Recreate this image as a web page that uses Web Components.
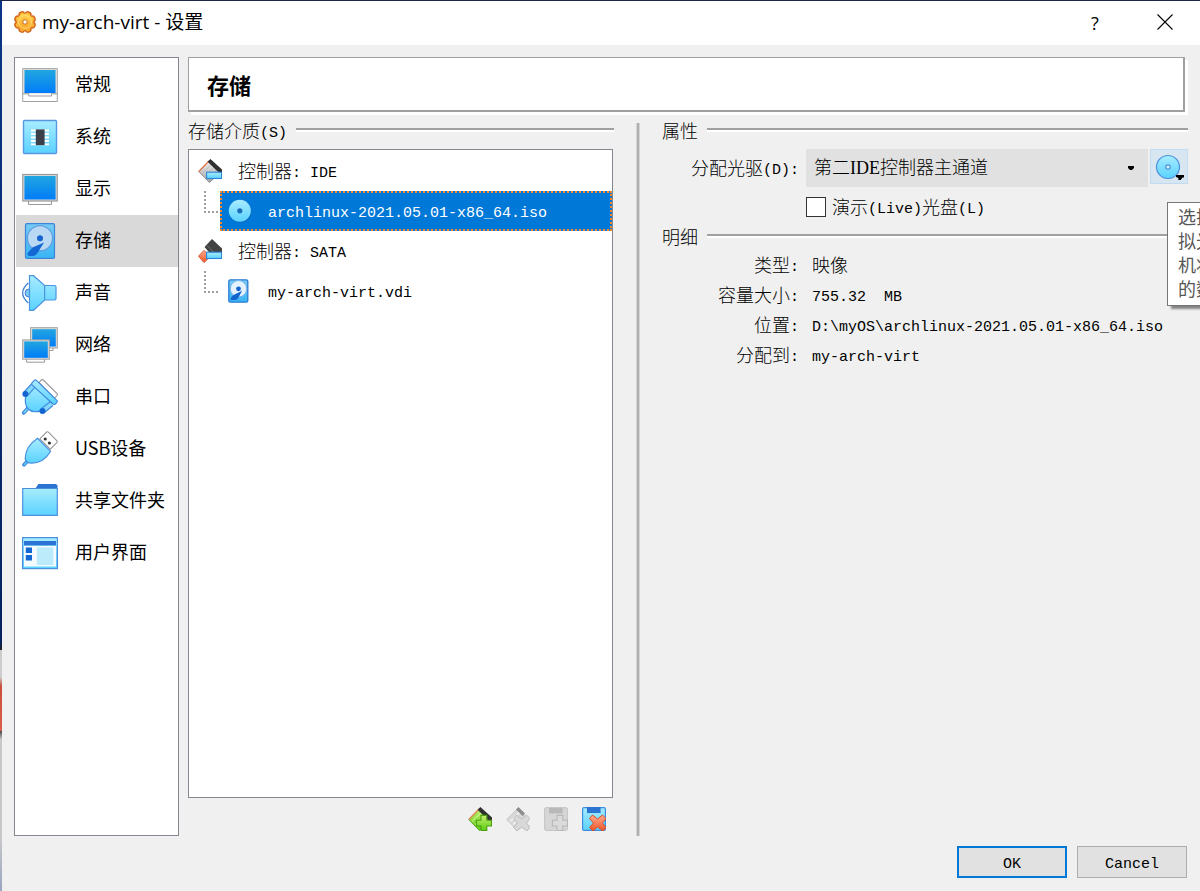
<!DOCTYPE html>
<html lang="zh-CN">
<head>
<meta charset="utf-8">
<title>my-arch-virt - 设置</title>
<style>
    html {
        height: 100%;
    }
    body {
        margin: 0;
        min-height: 100%;
        display: flex;
        flex-direction: column;
        box-sizing: border-box;
        padding: 1px 0 0 2px;
        overflow: hidden;
        --face: #f0f0f0;
        --frame: #828790;
        --groove: #a0a0a0;
        --control: #e1e1e1;
        --accent: #0078d7;
        color: #000;
        font: 18px/24px "Liberation Serif", "Noto Sans CJK SC", sans-serif;
        /* desktop showing behind the window edge */
        background:
            linear-gradient(#1f2547, #1f2547) 0 0 / 100% 1px no-repeat,
            linear-gradient(#0b3788 0%, #06225f 72%, #222 73%, #ccc 73%, #ccc 76%, #c8503c 77%, #d8604a 82%, #444 82%, #c8c8c8 83%, #c8c8c8 94%, #98a4c0 100%);
    }
</style>
</head>
<body>
<settings-window></settings-window>

<script>
// Shared paints, repeated in every icon because ids are scoped to a shadow root
const PAINTS = `
    <defs>
        <linearGradient id="screen" x2="0" y2="1"><stop stop-color="#22a6e0"/><stop offset="1" stop-color="#007cf8"/></linearGradient>
        <linearGradient id="cyan" x2="0" y2="1"><stop stop-color="#a8ecff"/><stop offset="1" stop-color="#5ad2ff"/></linearGradient>
        <linearGradient id="plate" x2="0" y2="1"><stop stop-color="#78ccf4"/><stop offset="1" stop-color="#38b4f4"/></linearGradient>
        <linearGradient id="metal" x2="0" y2="1"><stop stop-color="#f4f4f4"/><stop offset="1" stop-color="#a4a4a4"/></linearGradient>
        <linearGradient id="green" x2="0" y2="1"><stop stop-color="#c4f070"/><stop offset="1" stop-color="#5ccc10"/></linearGradient>
        <linearGradient id="red" x2="0" y2="1"><stop stop-color="#ffac8c"/><stop offset="1" stop-color="#ec5428"/></linearGradient>
        <linearGradient id="orange" x2="0" y2="1"><stop stop-color="#ffd44c"/><stop offset="1" stop-color="#f8a024"/></linearGradient>
    </defs>`;

const CROSS = 'M10.5 8 L15.5 12 L20.5 8 L24 11.5 L20.5 16 L24 20.5 L21 24 L15.5 20 L11 24 L7.5 20.5 L11.5 16 L7.5 11.5 Z';

// Eight round teeth of the gear
const teeth = r => [0, 45, 90, 135, 180, 225, 270, 315]
    .map(a => `<circle cx="12" cy="4.2" r="${r}" transform="rotate(${a + 22.5} 12 12)"/>`).join('');

// name: [width, height, markup]
const ICONS = {
    gear: [24, 24, `
        <g fill="#d4641c">${teeth(3.6)}<circle cx="12" cy="12" r="9"/></g>
        <g fill="#fbb43c">${teeth(2.2)}<circle cx="12" cy="12" r="8.4" fill="url(#orange)"/></g>
        <circle cx="12" cy="12" r="6.4" fill="none" stroke="#ffdc78"/>
        <circle cx="12" cy="12" r="2.2" fill="#fff" stroke="#c86820"/>`],
    general: [36, 36, `
        <path d="M.7 1.5 H35.3 V34.5 H.7 Z" fill="#fff" stroke="#a0a0a0"/>
        <rect x="1.2" y="1.8" width="33.6" height="25" fill="#d8d8d8"/>
        <rect x="2.5" y="3" width="31" height="23" fill="url(#screen)"/>
        <path d="M.7 26.8 H6.8 V29 H29.5 V26.8 H35" fill="#fff" stroke="#999"/>`],
    system: [36, 36, `
        <rect x="1.5" y="1.5" width="33" height="33" rx="1" fill="url(#cyan)" stroke="#5898e0" stroke-width="1.4"/>
        <path d="M9 11.5 H27 M9 15 H27 M9 18.5 H27 M9 22 H27 M9 25.3 H27" stroke="#fff" stroke-width="1.8"/>
        <rect x="13.8" y="10.4" width="8.8" height="15.8" fill="#3a3f4a"/>`],
    display: [36, 36, `
        <path d="M6.5 30 V33.5 H29.5 V30" fill="#fff" stroke="#999"/>
        <rect x=".8" y="3.5" width="34.4" height="26.5" fill="#ddd" stroke="#999" stroke-width="1.2"/>
        <rect x="2.4" y="5" width="31.2" height="23.5" fill="url(#screen)"/>`],
    storage: [36, 36, `
        <rect x="3.5" y=".6" width="29" height="34.8" rx="1.5" fill="url(#plate)" stroke="#3c84d8" stroke-width="1.2"/>
        <circle cx="18" cy="15.3" r="12.6" fill="#b8d8f4" stroke="#5a98e0" stroke-width="1.1"/>
        <circle cx="18" cy="15.3" r="3" fill="#1464d0"/>
        <path d="M22 19.5 L10.5 24.5 L6 29.5 Q4.5 32 7 33 H11.5 Q14 32.5 15.5 30 Z" fill="#1468d4"/>`],
    audio: [36, 36, `
        <path d="M6.3 8 Q-5 18 6.3 28" fill="none" stroke="#3c80d8" stroke-width="1.3"/>
        <circle cx="7" cy="18" r="4" fill="#7cc8f4" stroke="#3c80d8"/>
        <path d="M7.5 .7 H11.5 L22.6 10.5 H32.5 Q34 10.5 34 12 V23.5 Q34 25 32.5 25 H22.6 L11.5 35.3 H7.5 Z" fill="url(#cyan)" stroke="#4c94e0" stroke-width="1.2"/>
        <path d="M22.6 10.5 V25" stroke="#4c94e0" stroke-width="1.2"/>`],
    network: [36, 36, `
        <path d="M27 21 V23.5 H31 V21" fill="#fff" stroke="#999"/>
        <rect x="8.6" y=".7" width="26.7" height="20.3" fill="#ddd" stroke="#a0a0a0"/>
        <rect x="10.2" y="2.2" width="23.6" height="17.3" fill="url(#screen)"/>
        <path d="M4.6 32 V35.2 H22.6 V32" fill="#fff" stroke="#999"/>
        <rect x=".7" y="12.9" width="26.6" height="19.3" fill="#ddd" stroke="#a0a0a0"/>
        <rect x="2.2" y="14.4" width="23.6" height="16.4" fill="url(#screen)"/>`],
    serial: [36, 36, `
        <path d="M17 3.5 L19.5 .8 Q20.5 .3 21.3 1 L35 14.5 Q35.6 15.6 35 16.5 L32.5 19.3 Z" fill="#fff" stroke="#999" stroke-width="1.1"/>
        <path d="M7 28 L1.8 33.8" stroke="#3c88dc" stroke-width="3.8" stroke-linecap="round"/>
        <path d="M7 28 L2.2 33.4" stroke="#74d4fc" stroke-width="1.6" stroke-linecap="round"/>
        <path d="M12.5 5.5 L4.4 14.5 Q1.5 25.5 6.4 30.2 Q11 34.5 20 31.6 L30 24 Z" fill="url(#cyan)" stroke="#3c88dc" stroke-width="1.2"/>
        <path d="M10 4.5 L2.4 12.6 L6 16.2 L13.2 8 M28.5 22.5 L20 29 L23 33.2 L31 26.5" fill="#84d8fc" stroke="#3c88dc" stroke-width="1.1"/>
        <circle cx="3.4" cy="15" r="3" fill="#1464d0"/><circle cx="20.5" cy="32" r="3" fill="#1464d0"/>
        <path d="M9.8 4.2 L12.4 1.2 Q13.5 .4 14.5 1.3 L35 21.5 Q35.6 22.6 34.8 23.5 L33 25.2 Q32 25.8 31 25 L10 5.8 Q9.3 5 9.8 4.2 Z" fill="url(#cyan)" stroke="#3c88dc" stroke-width="1.1"/>`],
    usb: [36, 36, `
        <path d="M17.8 7.8 L24.6 1 Q25.6 .4 26.4 1.2 L35 9.8 Q35.6 10.6 35 11.4 L28.3 18.2 Z" fill="#fff" stroke="#999" stroke-width="1.1"/>
        <circle cx="23.2" cy="8" r="1.6" fill="#333"/><circle cx="27.4" cy="12" r="1.6" fill="#333"/>
        <path d="M6 29.5 L2 33.8" stroke="#3c88dc" stroke-width="3.6" stroke-linecap="round"/>
        <path d="M6 29.5 L2.4 33.4" stroke="#60ccfc" stroke-width="1.5" stroke-linecap="round"/>
        <path d="M15.5 7.3 L28.6 20.3 Q21 33.5 7 32 Q3.6 30.8 3.2 27.4 Q3.4 15.5 15.5 7.3 Z" fill="url(#cyan)" stroke="#4890e0" stroke-width="1.2"/>`],
    folder: [36, 36, `
        <path d="M13 6 L16.4 1 H34 L35.5 2.6 V8 H13 Z" fill="#2c74d4"/>
        <path d="M.7 5.5 H35.3 V32.3 H.7 Z" fill="url(#cyan)" stroke="#4c90dc" stroke-width="1.2"/>`],
    ui: [36, 36, `
        <rect x=".6" y="2.6" width="34.8" height="31" fill="url(#cyan)" stroke="#4c90dc" stroke-width="1.2"/>
        <rect x="2" y="6" width="32" height="4.4" fill="#2c74d4"/>
        <rect x="2" y="11" width="32" height="20.5" fill="#f4fbff"/>
        <path d="M3.8 12.4 H10 V18 H3.8 Z M3.8 20 H10 V25.6 H3.8 Z" fill="#1468d4"/>
        <rect x="14.8" y="12.4" width="16.6" height="17.6" fill="#bcecfc"/>`],
    ide: [24, 24, `
        <path d="M.8 12.5 L12 1 L23 13 L11.3 23.5 Z" fill="url(#metal)" stroke="#8c8c8c"/>
        <path d="M4 14.5 L14 5 M6.5 17 L17 7.5 M9 19.5 L19.5 10" stroke="#b4b4b4" stroke-width=".8"/>
        <path d="M.8 12.5 L11 2" stroke="#e47850" stroke-width="1.3"/>
        <path d="M9.6 2.8 L12.4 0 L24 10.6 V14 H21.2 Z" fill="#303030"/>
        <rect x="8.6" y="13.2" width="15" height="6.3" fill="url(#cyan)" stroke="#2c84d8" stroke-width="1.1"/>`],
    sata: [24, 24, `
        <path d="M14 0 L24 9.5 V14 L16 19 L6.5 8 Z" fill="#424242"/>
        <path d="M9 6.5 L16.5 14" stroke="#707070"/>
        <path d="M6 11.4 L12 17.8 L6 23.6 L.5 17.2 Z" fill="url(#red)" stroke="#d45c38"/>
        <rect x="8.6" y="13.2" width="15" height="6.3" fill="url(#cyan)" stroke="#2c84d8" stroke-width="1.1"/>`],
    disc: [24, 24, `
        <circle cx="12.4" cy="12.8" r="11" fill="#1c60b0" opacity=".6"/>
        <circle cx="11.8" cy="11.8" r="11" fill="url(#cyan)"/>
        <circle cx="11.8" cy="11.8" r="2.6" fill="#1c6cb8"/>`],
    disk: [21, 24, `
        <rect x=".8" y=".8" width="19" height="22.4" rx="1.5" fill="url(#plate)" stroke="#2c7cd4" stroke-width="1.3"/>
        <circle cx="10.5" cy="9.8" r="8.2" fill="#e4f2ff" stroke="#78b4ec"/>
        <circle cx="10.5" cy="9.8" r="2.4" fill="#1464d0"/>
        <path d="M14.2 11.8 L6.5 15.6 Q2.2 18 2.8 21 H7.5 Q10.5 20 11 17.6 Z" fill="#1464d0"/>`],
    'controller-add': [24, 24, `
        <path d="M.8 12.5 L12 1 L23 13 L11.3 23.5 Z" fill="url(#green)" stroke="#5ca830"/>
        <path d="M.8 12.5 L11 2" stroke="#e08850" stroke-width="1.3"/>
        <path d="M4 14.5 L14 5 M7 17.5 L12 13" stroke="#dcf8b0"/>
        <path d="M9.6 2.8 L12.4 0 L24 10.6 V14 H21.2 Z" fill="#303030"/>
        <path d="M13 8.4 H18.8 V13.2 H23.5 V19 H18.8 V23.5 H13 V19 H8.4 V13.2 H13 Z" fill="url(#green)" stroke="#4ca010" stroke-width="1.1"/>`],
    'controller-remove': [24, 24, `
        <path d="M.8 12.5 L12 1 L23 13 L11.3 23.5 Z" fill="#d8d8d8" stroke="#c8c8c8"/>
        <path d="M4 14.5 L14 5 M7 17.5 L12 13" stroke="#f0f0f0" stroke-width="1.6"/>
        <path d="M10 2.4 L12.4 0 L19 6.6 L16.6 9 Z" fill="#8c8c8c"/>
        <path d="${CROSS}" fill="#d8d8d8" stroke="#bcbcbc" stroke-linejoin="round"/>`],
    'medium-add': [24, 24, `
        <rect x=".6" y=".6" width="22.8" height="22.8" rx="1.5" fill="#d6d6d6" stroke="#c4c4c4"/>
        <rect x="5" y="1" width="13.6" height="5.4" fill="#b8b8b8"/>
        <path d="M13 8.4 H18.8 V13.2 H23.5 V19 H18.8 V23.5 H13 V19 H8.4 V13.2 H13 Z" fill="#dadada" stroke="#b8b8b8" stroke-width="1.1"/>`],
    'medium-remove': [24, 24, `
        <rect x=".6" y=".6" width="22.8" height="22.8" rx="1.5" fill="url(#cyan)" stroke="#3c8ce0" stroke-width="1.2"/>
        <rect x="5" y="0" width="13.6" height="6" fill="#2c74d4"/>
        <path d="${CROSS}" fill="url(#red)" stroke="#d44c28" stroke-linejoin="round"/>`],
    'disc-menu': [30, 28, `
        <circle cx="13" cy="14" r="11.5" fill="url(#cyan)" stroke="#4c90dc" stroke-width="1.2"/>
        <circle cx="13" cy="14" r="2.2" fill="#d8f4ff" stroke="#4c90dc" stroke-width="1.2"/>
        <path d="M21 22 H29 V24.4 H27.6 L25.6 27 H23.4 V25 L21 24 Z" fill="#000"/>`],
    close: [16, 16, `<path d="M.5 .5 L15.5 15.5 M15.5 .5 L.5 15.5" stroke="#000" stroke-width="1.1"/>`],
};

/**
 * <vb-icon name="...">
 */
class VbIcon extends HTMLElement {
    constructor() {
        super();
        this.attachShadow({ mode: 'open' });
    }

    connectedCallback() {
        const [w, h, markup] = ICONS[this.getAttribute('name')];
        this.shadowRoot.innerHTML = `
            <style>
                :host { display: flex; flex: none; }
                svg { display: block; }
            </style>
            <svg width="${w}" height="${h}" viewBox="0 0 ${w} ${h}" aria-hidden="true">${PAINTS}${markup}</svg>
        `;
    }
}

/**
 * <dual-text>: Chinese at full size, ASCII runs in a half-width mono face.
 */
class DualText extends HTMLElement {
    constructor() {
        super();
        this.attachShadow({ mode: 'open' });
    }

    connectedCallback() {
        const text = this.getAttribute('text');
        const html = text.replace(/[\x20-\x7e]+/g, run => `<span>${run}</span>`);
        // spaces are preserved here, so nothing may stand around the style tag
        this.shadowRoot.innerHTML = `<style>
                :host {
                    display: block;
                    height: 24px;
                    line-height: 22px;
                    white-space: pre;
                    font-family: "Noto Sans CJK SC", sans-serif;
                    font-weight: 300;
                }
                span {
                    font-family: "Liberation Mono", monospace;
                    font-size: 15px;
                    line-height: 1;
                    vertical-align: 1px;
                }
            </style>${html}`;
    }
}

class TitleBar extends HTMLElement {
    constructor() {
        super();
        this.attachShadow({ mode: 'open' }).innerHTML = `
            <style>
                :host {
                    display: flex;
                    align-items: center;
                    gap: 5px;
                    height: 44px;
                    padding-left: 11px;
                    background: #fff;
                    font-family: "Open Sans", "Noto Sans CJK SC", sans-serif;
                }
                vb-icon, h1 {
                    padding-bottom: 2px;
                }
                h1 {
                    flex: 1;
                    margin: 0;
                    font-size: 19px;
                    font-weight: 400;
                }
                .buttons {
                    display: flex;
                }
                button {
                    display: grid;
                    place-items: center;
                    width: 70px;
                    height: 44px;
                    padding: 0;
                    border: 0;
                    background: none;
                    font: inherit;
                }
            </style>
            <vb-icon name="gear"></vb-icon>
            <h1><slot></slot></h1>
            <div class="buttons">
                <button type="button" aria-label="Help">?</button>
                <button type="button" aria-label="Close"><vb-icon name="close"></vb-icon></button>
            </div>
        `;
    }
}

class NavItem extends HTMLElement {
    constructor() {
        super();
        this.attachShadow({ mode: 'open' });
    }

    connectedCallback() {
        this.shadowRoot.innerHTML = `
            <style>
                :host { display: block; }
                :host([selected]) { background: #d9d9d9; }
                button {
                    display: flex;
                    align-items: center;
                    gap: 17px;
                    width: 100%;
                    height: 52px;
                    padding: 0 0 0 6px;
                    border: 0;
                    background: none;
                    color: inherit;
                    font: inherit;
                    white-space: nowrap;
                }
                span { padding-bottom: 4px; }
            </style>
            <button type="button"><vb-icon name="${this.getAttribute('icon')}"></vb-icon><span><slot></slot></span></button>
        `;
    }
}

class NavList extends HTMLElement {
    constructor() {
        super();
        this.attachShadow({ mode: 'open' }).innerHTML = `
            <style>
                :host {
                    display: block;
                    box-sizing: border-box;
                    width: 165px;
                    padding: 1px 0 0 1px;
                    border: 1px solid var(--frame);
                    background: #fff;
                    font-family: "Noto Sans CJK SC", sans-serif;
                }
            </style>
            <nav><slot></slot></nav>
        `;
    }
}

/**
 * <group-box label="..."> - caption with an etched rule, content below
 */
class GroupBox extends HTMLElement {
    constructor() {
        super();
        this.attachShadow({ mode: 'open' });
    }

    connectedCallback() {
        this.shadowRoot.innerHTML = `
            <style>
                :host {
                    display: flex;
                    flex-direction: column;
                    gap: 6px;
                }
                .caption {
                    display: flex;
                    align-items: center;
                    gap: 9px;
                    height: 24px;
                }
                .rule {
                    flex: 1;
                    height: 2px;
                    margin-bottom: 2px;
                    border-bottom: 2px solid #fff;
                    background: var(--groove);
                    background-clip: padding-box;
                }
            </style>
            <div class="caption"><dual-text text="${this.getAttribute('label')}"></dual-text><div class="rule"></div></div>
            <slot></slot>
        `;
    }
}

class TreeRow extends HTMLElement {
    constructor() {
        super();
        this.attachShadow({ mode: 'open' });
    }

    connectedCallback() {
        const child = this.hasAttribute('child');
        this.shadowRoot.innerHTML = `
            <style>
                :host {
                    display: flex;
                    height: 40px;
                }
                .branch {
                    flex: none;
                    box-sizing: border-box;
                    width: 14px;
                    height: 22px;
                    margin: 0 2px 0 15px;
                    border: dotted #a0a0a0;
                    border-width: 0 0 2px 2px;
                }
                .row {
                    flex: 1;
                    box-sizing: border-box;
                    display: flex;
                    align-items: center;
                    border: 2px solid transparent;
                    padding-left: ${child ? 6 : 7}px;
                }
                vb-icon {
                    width: 40px;
                }
                :host([selected]) .row {
                    border: 2px dotted #ff8728;
                    background: var(--accent);
                    color: #fff;
                }
            </style>
            ${child ? '<div class="branch"></div>' : ''}
            <div class="row"><vb-icon name="${this.getAttribute('icon')}"></vb-icon><dual-text text="${this.getAttribute('label')}"></dual-text></div>
        `;
        this.setAttribute('role', 'treeitem');
    }
}

class StorageTree extends HTMLElement {
    constructor() {
        super();
        this.attachShadow({ mode: 'open' }).innerHTML = `
            <style>
                :host {
                    display: flex;
                    flex-direction: column;
                    flex: 1;
                }
                .tree {
                    flex: 1;
                    margin-right: 1px;
                    padding-top: 1px;
                    border: 1px solid var(--frame);
                    background: #fff;
                }
                .tools {
                    display: flex;
                    justify-content: flex-end;
                    gap: 14px;
                    padding: 9px 8px 5px 0;
                }
                button {
                    padding: 0;
                    border: 0;
                    background: none;
                }
            </style>
            <div class="tree" role="tree">
                <tree-row icon="ide" label="控制器: IDE"></tree-row>
                <tree-row child selected icon="disc" label="archlinux-2021.05.01-x86_64.iso"></tree-row>
                <tree-row icon="sata" label="控制器: SATA"></tree-row>
                <tree-row child icon="disk" label="my-arch-virt.vdi"></tree-row>
            </div>
            <div class="tools">
                <button type="button" aria-label="Add controller"><vb-icon name="controller-add"></vb-icon></button>
                <button type="button" aria-label="Remove controller" disabled><vb-icon name="controller-remove"></vb-icon></button>
                <button type="button" aria-label="Add attachment" disabled><vb-icon name="medium-add"></vb-icon></button>
                <button type="button" aria-label="Remove attachment"><vb-icon name="medium-remove"></vb-icon></button>
            </div>
        `;
    }
}

class DriveForm extends HTMLElement {
    constructor() {
        super();
        this.attachShadow({ mode: 'open' }).innerHTML = `
            <style>
                :host {
                    display: grid;
                    grid-template-columns: 137px 1fr;
                    column-gap: 7px;
                    row-gap: 8px;
                }
                .name {
                    justify-self: end;
                    align-self: center;
                }
                .field {
                    display: flex;
                    align-items: flex-start;
                    gap: 2px;
                }
                .combo {
                    flex: 1;
                    display: grid;
                    align-items: center;
                }
                .combo > * {
                    grid-area: 1 / 1;
                }
                .combo svg {
                    justify-self: end;
                    margin-right: 13px;
                    pointer-events: none;
                }
                select {
                    appearance: none;
                    width: 100%;
                    height: 38px;
                    padding: 0 24px 0 8px;
                    border: 0;
                    border-radius: 0;
                    background: var(--control);
                    color: inherit;
                    font: inherit;
                    font-weight: 300;
                }
                .pick {
                    position: relative;
                }
                button {
                    display: flex;
                    align-items: center;
                    width: 38px;
                    height: 35px;
                    padding: 0 0 0 4px;
                    border: 1px solid #c0dcf3;
                    background: #d8e6f2;
                }
                .check {
                    grid-column: 2;
                    display: flex;
                    align-items: center;
                    gap: 6px;
                    height: 24px;
                }
                input {
                    appearance: none;
                    width: 20px;
                    height: 20px;
                    margin: 0;
                    border: 1px solid #333;
                    background: #fff;
                }
                hover-tip {
                    position: absolute;
                    top: 53px;
                    left: 17px;
                }
            </style>
            <label class="name" for="drive"><dual-text text="分配光驱(D):"></dual-text></label>
            <div class="field">
                <div class="combo">
                    <select id="drive"><option>第二IDE控制器主通道</option></select>
                    <svg width="8" height="5" viewBox="0 0 8 5" aria-hidden="true"><path d="M1 0 H7 V2 L5 4 H3 L1 2 Z"/></svg>
                </div>
                <div class="pick">
                    <button type="button" aria-label="Choose disc"><vb-icon name="disc-menu"></vb-icon></button>
                    <hover-tip>选择<br>拟光<br>机将<br>的数</hover-tip>
                </div>
            </div>
            <div class="check">
                <input type="checkbox" id="live">
                <label for="live"><dual-text text="演示(Live)光盘(L)"></dual-text></label>
            </div>
        `;
    }
}

class HoverTip extends HTMLElement {
    constructor() {
        super();
        this.attachShadow({ mode: 'open' }).innerHTML = `
            <style>
                :host {
                    display: block;
                    padding: 1px 10px 5px;
                    border: 1px solid #767676;
                    background: #fff;
                    box-shadow: 4px 3px 2px rgba(0, 0, 0, 0.45);
                    color: #575757;
                    font-family: "Noto Sans CJK SC", sans-serif;
                    white-space: nowrap;
                }
            </style>
            <slot></slot>
        `;
    }
}

class MediumDetails extends HTMLElement {
    constructor() {
        super();
        const rows = [
            ['类型:', '映像'],
            ['容量大小:', '755.32  MB'],
            ['位置:', 'D:\\myOS\\archlinux-2021.05.01-x86_64.iso'],
            ['分配到:', 'my-arch-virt'],
        ];
        this.attachShadow({ mode: 'open' }).innerHTML = `
            <style>
                :host {
                    display: block;
                    margin-top: -2px;
                }
                dl {
                    display: grid;
                    grid-template-columns: 137px 1fr;
                    column-gap: 13px;
                    row-gap: 6px;
                    margin: 0;
                }
                dt { justify-self: end; }
                dd { margin: 0; }
            </style>
            <dl>${rows.map(([name, value]) => `
                <dt><dual-text text="${name}"></dual-text></dt>
                <dd><dual-text text="${value}"></dual-text></dd>`).join('')}
            </dl>
        `;
    }
}

class SettingsWindow extends HTMLElement {
    constructor() {
        super();
        this.attachShadow({ mode: 'open' }).innerHTML = `
            <style>
                :host {
                    flex: 1;
                    display: flex;
                    flex-direction: column;
                    background: var(--face);
                }
                .content {
                    flex: 1;
                    display: flex;
                    gap: 9px;
                    padding: 12px 12px 0;
                }
                main {
                    flex: 1;
                    min-width: 0;
                    display: flex;
                    flex-direction: column;
                    gap: 4px;
                }
                h2 {
                    margin: 0 3px 3px 0;
                    padding: 14px 18px;
                    border: solid var(--groove);
                    border-width: 1px 2px 2px 1px;
                    background: #fff;
                    box-shadow: 3px 3px #fff;
                    font: 700 22px/24px "Noto Sans CJK SC", sans-serif;
                }
                .panes {
                    flex: 1;
                    display: flex;
                }
                .media {
                    width: 426px;
                }
                .splitter {
                    width: 2px;
                    margin: 4px 22px 0;
                    border: solid #d4d4d4;
                    border-width: 0 1px;
                    background: #b0b0b0;
                }
                .side {
                    flex: 1;
                    min-width: 0;
                    display: flex;
                    flex-direction: column;
                    gap: 6px;
                }
                footer {
                    display: flex;
                    justify-content: flex-end;
                    gap: 10px;
                    padding: 10px 13px 13px;
                }
                footer button {
                    width: 110px;
                    height: 32px;
                    padding: 0;
                    border: 1px solid #adadad;
                    background: var(--control);
                    color: inherit;
                    font: inherit;
                }
                footer .default {
                    border: 2px solid var(--accent);
                }
            </style>
            <title-bar>my-arch-virt - 设置</title-bar>
            <div class="content">
                <nav-list>
                    <nav-item icon="general">常规</nav-item>
                    <nav-item icon="system">系统</nav-item>
                    <nav-item icon="display">显示</nav-item>
                    <nav-item icon="storage" selected>存储</nav-item>
                    <nav-item icon="audio">声音</nav-item>
                    <nav-item icon="network">网络</nav-item>
                    <nav-item icon="serial">串口</nav-item>
                    <nav-item icon="usb">USB设备</nav-item>
                    <nav-item icon="folder">共享文件夹</nav-item>
                    <nav-item icon="ui">用户界面</nav-item>
                </nav-list>
                <main>
                    <h2>存储</h2>
                    <div class="panes">
                        <group-box class="media" label="存储介质(S)"><storage-tree></storage-tree></group-box>
                        <div class="splitter"></div>
                        <div class="side">
                            <group-box label="属性"><drive-form></drive-form></group-box>
                            <group-box label="明细"><medium-details></medium-details></group-box>
                        </div>
                    </div>
                </main>
            </div>
            <footer>
                <button type="button" class="default"><dual-text text="OK"></dual-text></button>
                <button type="button"><dual-text text="Cancel"></dual-text></button>
            </footer>
        `;
    }
}

customElements.define('vb-icon', VbIcon);
customElements.define('dual-text', DualText);
customElements.define('title-bar', TitleBar);
customElements.define('nav-item', NavItem);
customElements.define('nav-list', NavList);
customElements.define('group-box', GroupBox);
customElements.define('tree-row', TreeRow);
customElements.define('storage-tree', StorageTree);
customElements.define('hover-tip', HoverTip);
customElements.define('drive-form', DriveForm);
customElements.define('medium-details', MediumDetails);
customElements.define('settings-window', SettingsWindow);
</script>
</body>
</html>
